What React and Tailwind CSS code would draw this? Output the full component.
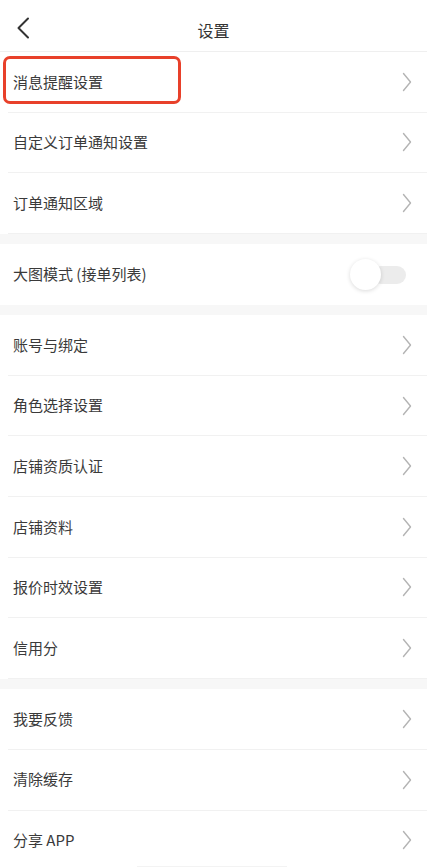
import React from 'react';

const font = { fontFamily: '"Noto Sans CJK SC", "Noto Sans", sans-serif' };

const Chevron = () => (
  <svg width="10" height="20" viewBox="0 0 10 20" fill="none" className="shrink-0">
    <path d="M1.5 1.5 L8.5 10 L1.5 18.5" stroke="#b4b4b4" strokeWidth="1.4" strokeLinecap="round" strokeLinejoin="round" />
  </svg>
);

const Row = ({ label, highlight }) => (
  <div className="relative h-[60.6px] flex flex-col">
    <div className="flex-1 flex items-center justify-between pl-[13px] pr-[15px]">
      <span className="text-[15px] text-[#3a3a3a]">{label}</span>
      <Chevron />
    </div>
    <div className="ml-[8px] h-px bg-[#f1f1f1]" />
    {highlight && (
      <div className="absolute left-[3px] top-[4px] w-[178px] h-[48px] border-[3px] border-[#e8402a] rounded-[7px]" />
    )}
  </div>
);

const Group = ({ items }) => (
  <div className="bg-white">
    {items.map((it) => (
      <Row key={it.label} {...it} />
    ))}
  </div>
);

const Gap = () => <div className="h-[10.5px] bg-[#f7f7f7]" />;

export default function App() {
  return (
    <div className="relative w-[427px] h-[868px] overflow-hidden bg-white" style={font}>
      <div className="relative h-[52px] flex justify-center border-b border-[#efefef]">
        <svg width="14" height="22" viewBox="0 0 14 22" fill="none" className="absolute left-[16px] top-[17px]">
          <path d="M12 1.5 L2.5 11 L12 20.5" stroke="#333333" strokeWidth="2" strokeLinecap="round" strokeLinejoin="round" />
        </svg>
        <span className="pt-[18px] text-[16px] leading-[24px] text-[#333333]">设置</span>
      </div>

      <Group items={[{ label: '消息提醒设置', highlight: true }, { label: '自定义订单通知设置' }, { label: '订单通知区域' }]} />
      <Gap />
      <div className="h-[60.5px] flex items-center justify-between pl-[13px] pr-[21px] bg-white">
        <span className="text-[15px] text-[#3a3a3a]">大图模式 (接单列表)</span>
        <div className="relative w-[56px] h-[32px]">
          <div className="absolute right-0 top-[7px] w-[34px] h-[18px] rounded-full bg-[#ececec]" />
          <div className="absolute left-0 top-0 w-[31px] h-[31px] rounded-full bg-white shadow-[0_1px_4px_rgba(0,0,0,0.15)]" />
        </div>
      </div>
      <Gap />
      <Group
        items={[
          { label: '账号与绑定' },
          { label: '角色选择设置' },
          { label: '店铺资质认证' },
          { label: '店铺资料' },
          { label: '报价时效设置' },
          { label: '信用分' },
        ]}
      />
      <Gap />
      <Group items={[{ label: '我要反馈' }, { label: '清除缓存' }, { label: '分享 APP' }]} />

      <div className="absolute bottom-[1px] left-[137px] w-[150px] h-[1px] bg-[#f3f3f3]" />
    </div>
  );
}
